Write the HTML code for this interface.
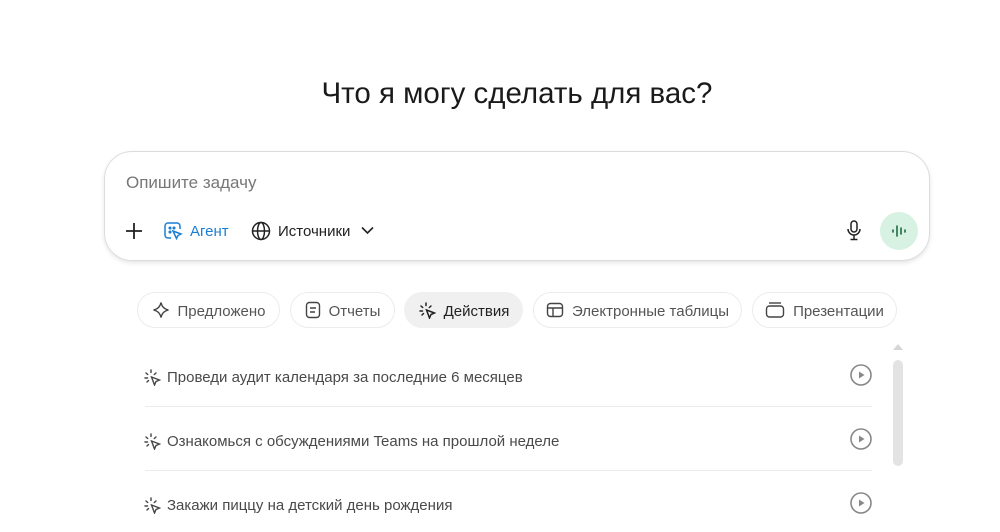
<!DOCTYPE html>
<html><head><meta charset="utf-8"><style>
body{margin:0;width:1000px;height:532px;background:#fff;font-family:"Segoe UI","Liberation Sans",sans-serif;position:relative;overflow:hidden;color:#242424}
.a{position:absolute}
h1{position:absolute;left:0;width:1034px;top:77px;margin:0;text-align:center;font-weight:400;font-size:29.5px;color:#1a1a1a}
.box{left:104px;top:151px;width:824px;height:108px;border:1px solid #dcdcdc;border-radius:28px;box-shadow:0 2px 4px rgba(0,0,0,.1)}
.chip{position:absolute;top:292px;height:36px;border:1px solid #ececec;border-radius:19px;font-size:15px;color:#555;display:flex;align-items:center;justify-content:center;gap:8px;box-sizing:border-box;padding-top:3px}
.chip svg{margin-top:-3px}
.row{position:absolute;left:143px;font-size:15px;color:#4a4a4a;display:flex;align-items:center;gap:6px}
.div{position:absolute;left:145px;width:727px;height:1px;background:#ebebeb}
.play{position:absolute;left:850px}
</style></head><body>
<h1>Что я могу сделать для вас?</h1>
<div class="a box"></div>
<div class="a" style="left:126px;top:173px;font-size:17px;color:#777">Опишите задачу</div>
<svg class="a" style="left:125px;top:222px" width="18" height="18"><path d="M9 1v16M1 9h16" stroke="#222" stroke-width="1.8"/></svg>
<svg class="a" style="left:163px;top:221px" width="20" height="20" fill="none" stroke="#1a7fd4" stroke-width="1.5"><path d="M8 17H5a3 3 0 0 1-3-3V5a3 3 0 0 1 3-3h9a3 3 0 0 1 3 3v3"/><circle cx="7" cy="7" r=".8" fill="#1a7fd4"/><circle cx="11" cy="7" r=".8" fill="#1a7fd4"/><circle cx="7" cy="11" r=".8" fill="#1a7fd4"/><path d="M10 10l8 3-3 1.5-1.5 3z"/></svg>
<div class="a" style="left:190px;top:223px;font-size:15px;color:#1a7fd4">Агент</div>
<svg class="a" style="left:251px;top:221px" width="20" height="20" fill="none" stroke="#222" stroke-width="1.5"><circle cx="10" cy="10" r="8.5"/><ellipse cx="10" cy="10" rx="3.5" ry="8.5"/><path d="M1.5 10h17"/></svg>
<div class="a" style="left:278px;top:223px;font-size:15px;color:#222">Источники</div>
<svg class="a" style="left:361px;top:226px" width="13" height="9"><path d="M1 1.5l5.5 5.5 5.5-5.5" stroke="#222" stroke-width="1.6" fill="none"/></svg>
<svg class="a" style="left:846px;top:220px" width="16" height="22" fill="none" stroke="#222" stroke-width="1.5"><rect x="5" y="1" width="6" height="11" rx="3"/><path d="M2 9a6 6 0 0 0 12 0M8 15v4M4.5 19.5h7"/></svg>
<div class="a" style="left:880px;top:212px;width:38px;height:38px;border-radius:50%;background:#d7f2e2"></div>
<svg class="a" style="left:891px;top:223px" width="16" height="16" stroke="#1f6b45" stroke-width="1.6" stroke-linecap="round"><path d="M2 7v2M6 3v10M10 5v6M14 7v2"/></svg>
<div class="chip" style="left:137px;width:143px"><svg width="18" height="18" fill="none" stroke="#444" stroke-width="1.4"><path d="M9 1.5c.8 4 3.5 6.7 7.5 7.5-4 .8-6.7 3.5-7.5 7.5-.8-4-3.5-6.7-7.5-7.5 4-.8 6.7-3.5 7.5-7.5z"/></svg>Предложено</div>
<div class="chip" style="left:290px;width:105px"><svg width="16" height="18" fill="none" stroke="#444" stroke-width="1.4"><rect x="1.5" y="1.5" width="13" height="15" rx="3"/><path d="M5 7h6M5 11h5"/></svg>Отчеты</div>
<div class="chip" style="left:404px;width:119px;background:#f0f0f0;border-color:#f0f0f0;color:#222"><svg width="18" height="18" fill="none" stroke="#222" stroke-width="1.5" stroke-linecap="round"><path d="M8 2v2.5M3 5l1.7 1.5M13 5l-1.7 1.5M2 10h2.5M4 14l1.5-1.5"/><path d="M8.5 9l8 3-3.5 1.5-1.5 3.5z"/></svg>Действия</div>
<div class="chip" style="left:533px;width:209px"><svg width="18" height="16" fill="none" stroke="#444" stroke-width="1.4"><rect x="1.5" y="1.5" width="15" height="13" rx="3"/><path d="M1.5 6h15M7 6v8.5"/></svg>Электронные таблицы</div>
<div class="chip" style="left:752px;width:145px"><svg width="20" height="18" fill="none" stroke="#444" stroke-width="1.4"><path d="M4 2h12"/><rect x="1.5" y="5" width="17" height="11" rx="3"/></svg>Презентации</div>
<svg width="0" height="0" style="position:absolute"><defs><g id="act" fill="none" stroke="#444" stroke-width="1.4" stroke-linecap="round"><path d="M8 2v2.5M3 5l1.7 1.5M13 5l-1.7 1.5M2 10h2.5M4 14l1.5-1.5"/><path d="M8.5 9l8 3-3.5 1.5-1.5 3.5z"/></g><g id="pl"><circle cx="11" cy="11" r="10" fill="none" stroke="#888" stroke-width="1.6"/><path d="M9 7.5v7l5.5-3.5z" fill="#888"/></g></defs></svg>
<div class="row" style="top:368px"><svg width="18" height="18"><use href="#act"/></svg>Проведи аудит календаря за последние 6 месяцев</div>
<div class="div" style="top:406px"></div>
<div class="row" style="top:432px"><svg width="18" height="18"><use href="#act"/></svg>Ознакомься с обсуждениями Teams на прошлой неделе</div>
<div class="div" style="top:470px"></div>
<div class="row" style="top:496px"><svg width="18" height="18"><use href="#act"/></svg>Закажи пиццу на детский день рождения</div>
<svg class="play" style="top:364px" width="22" height="22"><use href="#pl"/></svg>
<svg class="play" style="top:428px" width="22" height="22"><use href="#pl"/></svg>
<svg class="play" style="top:492px" width="22" height="22"><use href="#pl"/></svg>
<svg class="a" style="left:892px;top:343px" width="12" height="8"><path d="M6 1l5 6H1z" fill="#d6d6d6"/></svg>
<div class="a" style="left:893px;top:360px;width:10px;height:106px;border-radius:5px;background:#e3e3e3"></div>
</body></html>
